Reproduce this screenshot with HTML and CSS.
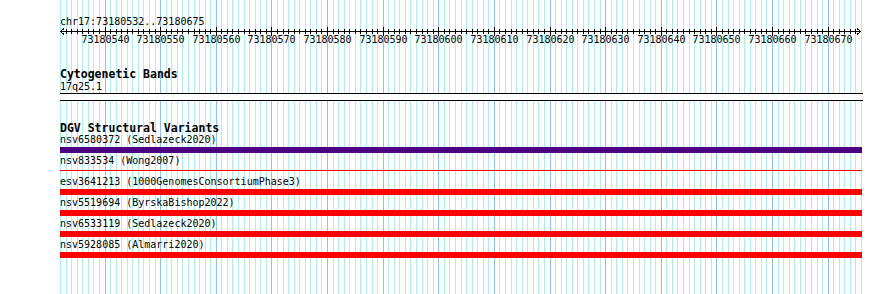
FILE: index.html
```html
<!DOCTYPE html>
<html lang="en">
<head>
    <meta charset="UTF-8">
    <title>chr17:73180532..73180675</title>
    <link rel="stylesheet" href="styles.css">
</head>
<body>
    <div class="browser">
        <svg class="guides" id="guides" width="890" height="294"></svg>

        <div class="tracks">
            <div class="position">chr17:73180532..73180675</div>
            <svg class="ruler" id="ruler" width="803" height="18"></svg>

            <section class="track">
                <h2 class="track-title">Cytogenetic Bands</h2>
                <div class="item-label">17q25.1</div>
                <div class="band"></div>
            </section>

            <section class="track dgv">
                <h2 class="track-title">DGV Structural Variants</h2>
                <div class="feature">
                    <div class="item-label">nsv6580372 (Sedlazeck2020)</div>
                    <div class="bar bar-gain"></div>
                </div>
                <div class="feature">
                    <div class="item-label">nsv833534 (Wong2007)</div>
                    <div class="bar bar-thin"></div>
                </div>
                <div class="feature">
                    <div class="item-label">esv3641213 (1000GenomesConsortiumPhase3)</div>
                    <div class="bar bar-loss"></div>
                </div>
                <div class="feature">
                    <div class="item-label">nsv5519694 (ByrskaBishop2022)</div>
                    <div class="bar bar-loss"></div>
                </div>
                <div class="feature">
                    <div class="item-label">nsv6533119 (Sedlazeck2020)</div>
                    <div class="bar bar-loss"></div>
                </div>
                <div class="feature">
                    <div class="item-label">nsv5928085 (Almarri2020)</div>
                    <div class="bar bar-loss"></div>
                </div>
            </section>
        </div>
    </div>

    <script>
        //one guide line per base, darker every 10 bases
        const ns = "http://www.w3.org/2000/svg";
        const start = 73180532;
        const bases = 144;
        const step = 5.5625;
        const left = 60;

        function addLine(svg, x, y1, y2, color){
            let line = document.createElementNS(ns, "line");
            line.setAttribute("x1", x);
            line.setAttribute("x2", x);
            line.setAttribute("y1", y1);
            line.setAttribute("y2", y2);
            line.setAttribute("stroke", color);
            svg.appendChild(line);
        }

        let guides = document.querySelector("#guides");
        for(let i=0;i<=bases;i++){
            let x = left + Math.round(i*step) + 0.5;
            let major = (start + i) % 10 == 0;
            addLine(guides, x, 0, 294, major ? "#88c4ec" : "#aeeeee");
        }

        //base position ruler
        let ruler = document.querySelector("#ruler");
        let end = Math.round(bases*step);
        addLine(ruler, 0, 0, 0, "#000");
        let axis = document.createElementNS(ns, "path");
        axis.setAttribute("d", "M0 4.5H" + end + " M4 1.5L0.5 4.5L4 7.5 M" + (end-4) + " 1.5L" + (end-0.5) + " 4.5L" + (end-4) + " 7.5");
        axis.setAttribute("stroke", "#000");
        axis.setAttribute("fill", "none");
        ruler.appendChild(axis);

        for(let i=1;i<bases;i++){
            let x = Math.round(i*step) + 0.5;
            let major = (start + i) % 10 == 0;
            addLine(ruler, x, major ? 0 : 2, major ? 9 : 7, "#000");
            if(major){
                let label = document.createElementNS(ns, "text");
                label.setAttribute("x", x);
                label.setAttribute("y", 16);
                label.setAttribute("text-anchor", "middle");
                label.textContent = start + i;
                ruler.appendChild(label);
            }
        }
    </script>
</body>
</html>
```

FILE: styles.css
```css
* {
    box-sizing: border-box;
}

body {
    margin: 0;
    background-color: white;
    font-family: "DejaVu Sans Mono", "Liberation Mono", monospace;
    font-size: 10px;
    color: black;
}

.browser {
    position: relative;
    width: 890px;
    height: 294px;
    overflow: hidden;
}

.guides {
    position: absolute;
    top: 0;
    left: 0;
    shape-rendering: crispEdges;
}

.tracks {
    position: relative;
    padding-top: 16px;
    padding-left: 60px;
    width: 863px;
}

.position {
    line-height: 11px;
    height: 11px;
}

.ruler {
    display: block;
    shape-rendering: crispEdges;
    font-family: "DejaVu Sans Mono", "Liberation Mono", monospace;
    font-size: 10px;
}

.track {
    margin-top: 23px;
}

.track-title {
    margin: 0;
    font-size: 11.5px;
    line-height: 13px;
    font-weight: bold;
}

.item-label {
    line-height: 11px;
    height: 11px;
    white-space: nowrap;
}

.band {
    margin-top: 1px;
    height: 8px;
    border-top: 1px solid black;
    border-bottom: 1px solid black;
    background-color: white;
}

.dgv {
    margin-top: 21px;
}

.dgv .track-title {
    line-height: 12px;
}

.feature {
    display: flex;
    flex-direction: column;
}

.bar {
    height: 6px;
    margin-top: 2px;
    margin-bottom: 2px;
    width: 802px;
}

.bar-gain {
    background-color: #4b0082;
}

.bar-loss {
    background-color: red;
}

.bar-thin {
    background: linear-gradient(red, red) 0 2px / 100% 1px no-repeat;
}
```
